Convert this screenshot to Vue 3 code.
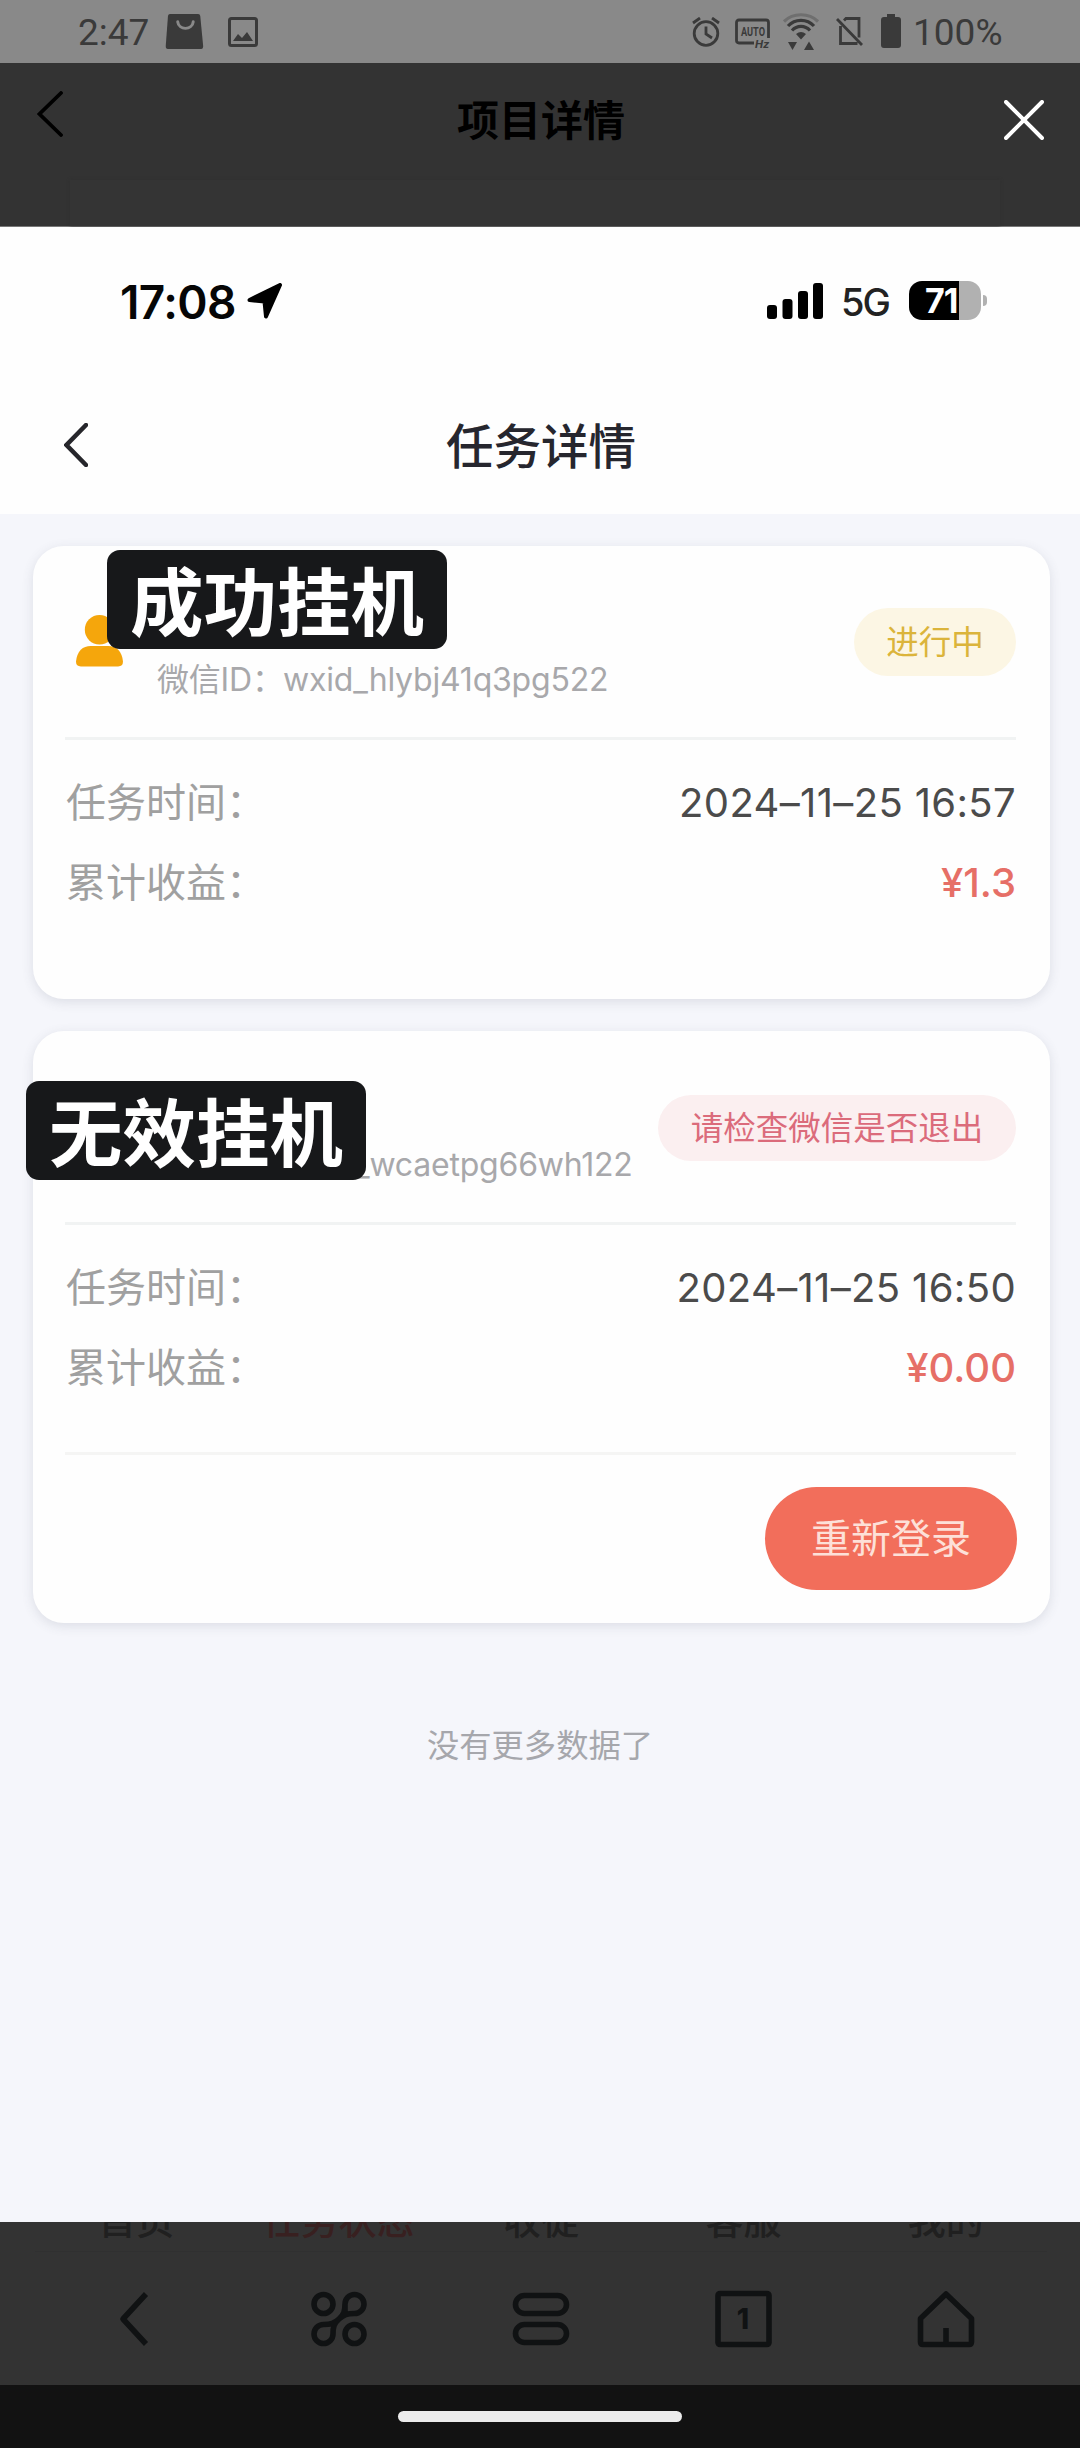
<template>
  <main class="screen">
    <header class="system-bar">
      <div class="system-left">
        <span class="clock">2:47</span>
        <svg class="bag-icon" viewBox="0 0 40 36">
          <path d="M5 0h29q2 0 2.200 2l3 31q0 3-2 3H3q-2.500 0-2.300-3L3 2q.3-2 2-2z" fill="#3a3a3a" />
          <path d="M13 8c1 9 15 9 16 0" fill="none" stroke="#898989" stroke-width="3" stroke-linecap="round" />
        </svg>
        <svg class="picture-icon" viewBox="0 0 30 30">
          <rect x="1.500" y="1.500" width="27" height="27" rx="2" fill="none" stroke="#3a3a3a" stroke-width="3" />
          <path d="M5 24l5-7 4 4 5-6 6 9z" fill="#3a3a3a" />
        </svg>
      </div>
      <div class="system-right">
        <svg class="alarm-icon" viewBox="0 0 28 30" fill="none" stroke="#3a3a3a" stroke-width="2.800">
          <circle cx="14" cy="16.500" r="11.800" />
          <path d="M14 9.500v7.500l6 4M1 6l7-5M27 6l-7-5" />
        </svg>
        <svg class="auto-icon" viewBox="0 0 36 32">
          <path d="M19 25H4q-2.500 0-2.500-2.500v-18Q1.500 2 4 2h27q2.500 0 2.500 2.500V20" fill="none" stroke="#3a3a3a" stroke-width="2.800" />
          <text x="6" y="18" font-size="12.500" textLength="24" lengthAdjust="spacingAndGlyphs">AUTO</text>
          <text x="20" y="30" font-size="11" font-style="italic" textLength="14" lengthAdjust="spacingAndGlyphs">Hz</text>
        </svg>
        <svg class="wifi-icon" viewBox="0 0 36 38" fill="none" stroke="#3a3a3a" stroke-width="3.200">
          <path d="M1 8.500C10-.5 26-.5 35 8.500" stroke="#6f6f6f" />
          <path d="M5 13C12 5.500 24 5.500 31 13M9 17.500C14 12 22 12 27 17.500" />
          <path d="M13 21q5-4 10 0l-5 5.500zM5 29h9l-4.500 8zM21 37h10l-5-8.500z" fill="#3a3a3a" stroke="none" />
        </svg>
        <svg class="sim-icon" viewBox="0 0 27 29" fill="none" stroke="#3a3a3a" stroke-width="2.800">
          <path d="M8 3.500L10 1.500h13v19M4.500 9v17.500h17M1 2l25 26" />
        </svg>
        <svg class="cell-icon" viewBox="0 0 20 34">
          <path d="M6 0h8v3h3q3 0 3 3v25q0 3-3 3H3q-3 0-3-3V6q0-3 3-3h3z" fill="#3a3a3a" />
        </svg>
        <span class="percent">100%</span>
      </div>
    </header>

    <section class="page-bar">
      <svg class="page-back" viewBox="0 0 26 46">
        <path d="M24 2L2.500 23 24 44" fill="none" stroke="#000" stroke-width="3.800" stroke-linecap="round" />
      </svg>
      <h1>项目详情</h1>
      <svg class="close" viewBox="0 0 40 40">
        <path d="M2 2l36 36M38 2L2 38" stroke="#fff" stroke-width="4" stroke-linecap="round" />
      </svg>
      <div class="page-card"></div>
    </section>

    <section class="viewer">
      <div class="viewer-top">
        <div class="phone-bar">
          <span class="phone-time">17:08</span>
          <svg class="location" viewBox="0 0 36 36">
            <path d="M33 2L19 33.500 17.500 18.500 2.500 17z" fill="#000" stroke="#000" stroke-width="4" stroke-linejoin="round" />
          </svg>
          <svg class="signal" viewBox="0 0 56 36">
            <rect x="0" y="22" width="10" height="14" rx="3" />
            <rect x="15.500" y="16" width="10" height="20" rx="3" />
            <rect x="31" y="8" width="10" height="28" rx="3" />
            <rect x="46" y="0" width="10" height="36" rx="3" />
          </svg>
          <span class="network">5G</span>
          <div class="battery"><span>71</span></div>
          <i class="battery-tip"></i>
        </div>
        <div class="task-bar">
          <svg class="task-back" viewBox="0 0 24 44">
            <path d="M22 2L2.500 22 22 42" fill="none" stroke="#26262b" stroke-width="4.500" stroke-linecap="round" />
          </svg>
          <h2>任务详情</h2>
        </div>
      </div>

      <article v-for="task in tasks" :key="task.time" class="card" :class="task.type">
        <div class="card-head">
          <svg v-if="task.type === 'running'" class="person" viewBox="0 0 48 54">
            <circle cx="24" cy="15.500" r="15" />
            <path d="M0 48C1 37 7 32 15 32h18c8 0 14 5 15 16q0 5-5 5H5q-5 0-5-5z" />
          </svg>
          <p class="account"><span v-if="task.label" class="account-label">{{ task.label }}</span>{{ task.account }}</p>
          <span class="badge">{{ task.status }}</span>
        </div>
        <div class="card-body">
          <div class="row">
            <span class="label">任务时间：</span>
            <span class="time">{{ task.time }}</span>
          </div>
          <div class="row">
            <span class="label">累计收益：</span>
            <span class="income">{{ task.income }}</span>
          </div>
        </div>
        <div v-if="task.type === 'invalid'" class="card-foot">
          <button>重新登录</button>
        </div>
        <strong class="mark">{{ task.mark }}</strong>
      </article>

      <p class="no-more">没有更多数据了</p>
    </section>

    <footer class="page-foot">
      <nav class="tabs">
        <span v-for="(tab, i) in tabs" :key="tab" :class="{ active: i === 1 }">{{ tab }}</span>
      </nav>
      <div class="tools">
        <svg viewBox="0 0 56 56"><path d="M38 3L15 28l23 25" /></svg>
        <svg viewBox="0 0 56 56">
          <circle cx="12.500" cy="13" r="9.500" />
          <circle cx="43.500" cy="43" r="9.500" />
          <path d="M34 22.500V13a9.500 9.500 0 1 1 9.500 9.500C36 22.500 33 23.500 28 28C23 32.500 22 36 22 43a9.500 9.500 0 1 1-9.500-9.500C20 33.500 23 32.500 28 28S34 20 34 13" />
        </svg>
        <svg viewBox="0 0 56 56">
          <rect x="2.500" y="4.500" width="51" height="18" rx="9" />
          <rect x="2.500" y="33.500" width="51" height="18" rx="9" />
        </svg>
        <svg viewBox="0 0 56 56">
          <rect x="3" y="2.500" width="51" height="51" rx="2" />
          <text x="28" y="38" text-anchor="middle">1</text>
        </svg>
        <svg viewBox="0 0 56 56"><path d="M28 3L2.500 27.500V51q0 2.500 2.500 2.500h46q2.500 0 2.500-2.500V27.500zM28 37v16" /></svg>
      </div>
    </footer>
    <div class="gesture-bar"><i></i></div>
  </main>
</template>

<script setup>
  const tasks = [
    {
      type: 'running',
      mark: '成功挂机',
      label: '微信ID：',
      account: 'wxid_hlybj41q3pg522',
      status: '进行中',
      time: '2024–11–25 16:57',
      income: '¥1.3',
    },
    {
      type: 'invalid',
      mark: '无效挂机',
      account: '_wcaetpg66wh122',
      status: '请检查微信是否退出',
      time: '2024–11–25 16:50',
      income: '¥0.00',
    },
  ];

  const tabs = ['首页', '任务状态', '收徒', '客服', '我的'];
</script>

<style>
  body {
    margin: 0;
    background: #333;
  }
</style>

<style scoped>
  .screen {
    width: 1080px;
    height: 2448px;
    display: flex;
    flex-direction: column;
    overflow: hidden;
    background: #333;
    font-family: Inter, "Noto Sans CJK SC", sans-serif;
  }

  .screen * {
    box-sizing: border-box;
  }

  h1, h2, p {
    margin: 0;
  }

  svg {
    display: block;
    flex: none;
  }

  .system-bar {
    height: 63px;
    flex: none;
    display: flex;
    justify-content: space-between;
    padding: 0 78px;
    background: #898989;
    color: #3a3a3a;
    font-family: Roboto, sans-serif;
    font-size: 37px;
    line-height: 66px;
  }

  .system-left, .system-right {
    display: flex;
    align-items: flex-start;
  }

  .clock {
    width: 87px;
  }

  .bag-icon {
    width: 39px;
    height: 35px;
    margin: 14px 24px 0 0;
  }

  .picture-icon {
    width: 30px;
    height: 30px;
    margin-top: 17px;
  }

  .alarm-icon {
    width: 28px;
    height: 30px;
    margin: 17px 15px 0 0;
  }

  .auto-icon {
    width: 36px;
    height: 32px;
    margin: 18px 12px 0 0;
  }

  .auto-icon text {
    font-weight: 700;
    fill: #3a3a3a;
  }

  .wifi-icon {
    width: 36px;
    height: 38px;
    margin: 13px 17px 0 0;
  }

  .sim-icon {
    width: 27px;
    height: 29px;
    margin: 17px 18px 0 0;
  }

  .cell-icon {
    width: 20px;
    height: 34px;
    margin: 14px 12px 0 0;
  }

  .percent {
    width: 89px;
  }

  .page-bar {
    height: 164px;
    flex: none;
    display: grid;
    grid-template-columns: 201px 1fr 199px;
    grid-template-rows: 117px 46px;
    border-bottom: 1px solid #777;
  }

  .page-back {
    width: 26px;
    height: 46px;
    margin: 28px 0 0 37px;
  }

  .page-bar h1 {
    color: #000;
    font-size: 42px;
    font-weight: 700;
    line-height: 116px;
    text-align: center;
  }

  .close {
    width: 40px;
    height: 40px;
    margin: 37px 36px 0 auto;
  }

  .page-card {
    grid-column: 1 / 4;
    margin: 0 80px 0 70px;
    background: #343434;
    box-shadow: 0 0 3px #303030;
  }

  .viewer {
    height: 1995px;
    flex: none;
    background: #f5f6fb;
  }

  .viewer-top {
    height: 287px;
    margin-bottom: 32px;
    background: #fefefe;
  }

  .phone-bar {
    height: 147px;
    display: flex;
    align-items: center;
    padding-left: 120px;
  }

  .phone-time {
    width: 127px;
    padding-top: 2px;
    color: #060606;
    font-size: 46px;
    font-weight: 600;
    letter-spacing: -0.6px;
  }

  .location {
    width: 36px;
    height: 36px;
  }

  .signal {
    width: 56px;
    height: 36px;
    margin-left: 484px;
  }

  .network {
    width: 67px;
    margin-left: 18px;
    padding-top: 3px;
    color: #222;
    font-size: 38px;
    font-weight: 500;
    letter-spacing: -2px;
  }

  .battery {
    width: 72px;
    height: 39px;
    margin-left: 1px;
    border-radius: 13px;
    background: linear-gradient(90deg, #000 50px, #b1b1b1 50px);
    color: #fff;
    font-size: 34px;
    font-weight: 700;
    letter-spacing: -1px;
    line-height: 39px;
    padding-left: 16px;
  }

  .battery-tip {
    width: 4px;
    height: 11px;
    margin-left: 2px;
    border-radius: 0 4px 4px 0;
    background: #b1b1b1;
  }

  .task-bar {
    height: 140px;
    display: grid;
    grid-template-columns: 100px 1fr 98px;
  }

  .task-back {
    width: 24px;
    height: 44px;
    margin: 49px 0 0 64px;
  }

  .task-bar h2 {
    color: #26262e;
    font-size: 47.500px;
    font-weight: 500;
    line-height: 145px;
    text-align: center;
  }

  .card {
    position: relative;
    height: 453px;
    margin: 0 30px 32px 33px;
    padding: 0 34px 0 32px;
    border-radius: 31px;
    background: #fefefe;
    box-shadow: 0 3px 12px rgba(70, 80, 100, 0.14);
  }

  .card.invalid {
    height: 592px;
  }

  .card-head {
    height: 194px;
    display: flex;
    align-items: flex-start;
    border-bottom: 3px solid #f1f3f3;
  }

  .person {
    width: 47px;
    height: 54px;
    margin: 68px 34px 0 11px;
    fill: #f5a60c;
  }

  .account {
    height: 40px;
    margin-top: 114px;
    color: #a8a8ab;
    font-size: 32px;
    letter-spacing: -0.2px;
    line-height: 40px;
    white-space: nowrap;
  }

  .account-label {
    display: inline-block;
    width: 126px;
  }

  .invalid .account {
    padding-left: 290px;
  }

  .badge {
    width: 162px;
    height: 68px;
    margin: 62px 0 0 auto;
    border-radius: 34px;
    background: #fcf6e4;
    color: #dbb43b;
    font-size: 32.500px;
    line-height: 70px;
    text-align: center;
    white-space: nowrap;
  }

  .invalid .badge {
    width: 358px;
    height: 66px;
    margin-top: 64px;
    background: #fbeff0;
    color: #db6b7b;
    line-height: 67px;
  }

  .card-body {
    padding-top: 23px;
  }

  .row {
    height: 80px;
    display: flex;
    justify-content: space-between;
    align-items: center;
    font-size: 40px;
    line-height: 80px;
  }

  .label {
    padding-left: 1px;
    color: #a0a0a0;
  }

  .time {
    color: #4b4b4b;
    letter-spacing: 0.35px;
  }

  .income {
    color: #e66f67;
    font-weight: 500;
  }

  .card-foot {
    height: 171px;
    display: flex;
    justify-content: flex-end;
    align-items: flex-start;
    margin-top: 44px;
    padding-top: 32px;
    border-top: 3px solid #f5f5f4;
  }

  .card-foot button {
    width: 252px;
    height: 103px;
    margin-right: -1px;
    padding: 0 0 5px;
    border: none;
    border-radius: 52px;
    background: #f26e5b;
    color: #fde0d8;
    font-family: inherit;
    font-size: 40px;
  }

  /* black captions sit on top of the cards */
  .mark {
    position: absolute;
    top: 4px;
    left: 74px;
    width: 340px;
    height: 99px;
    border-radius: 13px;
    background: #17181a;
    color: #fff;
    font-size: 73.500px;
    font-weight: 700;
    line-height: 107px;
    text-align: center;
  }

  .invalid .mark {
    top: 50px;
    left: -7px;
  }

  .no-more {
    padding-top: 67px;
    color: #a6a7ac;
    font-size: 32.300px;
    line-height: 48px;
    text-align: center;
  }

  .page-foot {
    height: 163px;
    flex: none;
    padding: 0 33px 0 35px;
    overflow: hidden;
  }

  .tabs {
    height: 30px;
    display: grid;
    grid-template-columns: repeat(5, 1fr);
    color: #202020;
    font-size: 38px;
    font-weight: 500;
    line-height: 54px;
    text-align: center;
    border-bottom: 1px solid #303030;
  }

  .tabs span {
    margin-top: -29px;
  }

  .tabs .active {
    color: #382020;
  }

  .tools {
    display: grid;
    grid-template-columns: repeat(5, 1fr);
    justify-items: center;
    padding-top: 39px;
  }

  .tools svg {
    width: 56px;
    height: 56px;
    fill: none;
    stroke: #101213;
    stroke-width: 5.600;
    stroke-linejoin: round;
    overflow: visible;
  }

  .tools text {
    fill: #101213;
    stroke: none;
    font-size: 28px;
    font-weight: 800;
  }

  .gesture-bar {
    flex: 1;
    padding-top: 26px;
    background: #121212;
  }

  .gesture-bar i {
    display: block;
    width: 284px;
    height: 11px;
    margin: 0 auto;
    border-radius: 6px;
    background: #ebebeb;
  }
</style>
